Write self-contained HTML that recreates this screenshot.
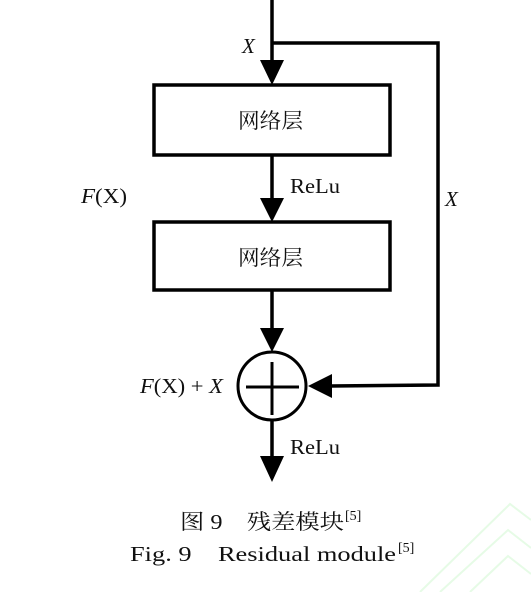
<!DOCTYPE html>
<html><head><meta charset="utf-8"><style>
html,body{margin:0;padding:0;background:#fff;}
svg{display:block;}
text{font-family:"Liberation Serif","Noto Serif CJK SC",serif;fill:#111;}
</style></head><body>
<svg width="531" height="592" viewBox="0 0 531 592" xmlns="http://www.w3.org/2000/svg">
<g stroke="#e6fbe6" stroke-width="2" fill="none">
<polyline points="420,592 510,504 531,520"/>
<polyline points="440,592 508,530 531,548"/>
<polyline points="470,592 508,556 531,574"/>
</g>
<g stroke="#000" stroke-width="3.5" fill="none">
<line x1="272" y1="0" x2="272" y2="64"/>
<polyline points="272,43 438,43 438,385 330,386"/>
<rect x="154" y="85" width="236" height="70"/>
<line x1="272" y1="155" x2="272" y2="200"/>
<rect x="154" y="222" width="236" height="68"/>
<line x1="272" y1="290" x2="272" y2="330"/>
<circle cx="272" cy="386" r="34" stroke-width="3"/>
<line x1="246" y1="387" x2="299" y2="387" stroke-width="3"/>
<line x1="272" y1="362" x2="272" y2="415" stroke-width="3"/>
<line x1="272" y1="420" x2="272" y2="458"/>
</g>
<g fill="#000">
<polygon points="260,60 284,60 272,85"/>
<polygon points="260,198 284,198 272,222"/>
<polygon points="260,328 284,328 272,352"/>
<polygon points="260,456 284,456 272,482"/>
<polygon points="332,374 332,398 308,386"/>
</g>
<text x="242" y="53" font-size="21" font-style="italic">X</text>
<text x="238" y="128" font-size="21" textLength="65" lengthAdjust="spacingAndGlyphs">网络层</text>
<text x="238" y="265" font-size="21" textLength="65" lengthAdjust="spacingAndGlyphs">网络层</text>
<text x="290" y="193" font-size="21" textLength="50" lengthAdjust="spacingAndGlyphs">ReLu</text>
<text x="290" y="454" font-size="21" textLength="50" lengthAdjust="spacingAndGlyphs">ReLu</text>
<text x="81" y="203" font-size="21" textLength="46" lengthAdjust="spacingAndGlyphs"><tspan font-style="italic">F</tspan>(X)</text>
<text x="445" y="206" font-size="21" font-style="italic">X</text>
<text x="140" y="393" font-size="21" textLength="83" lengthAdjust="spacingAndGlyphs"><tspan font-style="italic">F</tspan>(X) + <tspan font-style="italic">X</tspan></text>
<text x="180" y="529" font-size="21" textLength="164" lengthAdjust="spacingAndGlyphs">图 9　残差模块</text>
<text x="345" y="520" font-size="14">[5]</text>
<text x="130" y="561" font-size="21" textLength="266" lengthAdjust="spacingAndGlyphs">Fig. 9　Residual module</text>
<text x="398" y="552" font-size="14">[5]</text>
</svg>
</body></html>
